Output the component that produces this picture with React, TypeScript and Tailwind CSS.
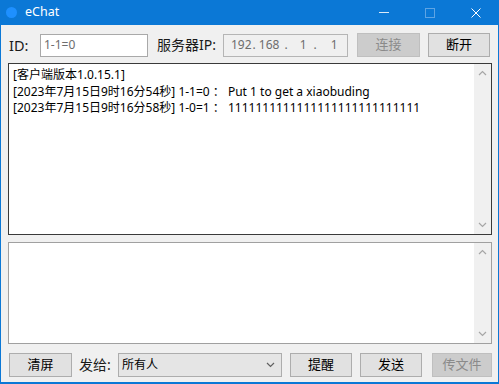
import React from "react";

const font = { fontFamily: '"Noto Sans", "Noto Sans CJK SC", sans-serif' };

function Up() {
  return (
    <svg width="9" height="6" viewBox="0 0 9 6">
      <polyline points="1,5 4.5,1.5 8,5" fill="none" stroke="#a6a6a6" strokeWidth="1.2" />
    </svg>
  );
}
function Down({ color = "#a6a6a6" }: { color?: string }) {
  return (
    <svg width="9" height="6" viewBox="0 0 9 6">
      <polyline points="1,1 4.5,4.5 8,1" fill="none" stroke={color} strokeWidth="1.2" />
    </svg>
  );
}

function Scroll() {
  return (
    <div className="w-[17px] h-full bg-[#f0f0f0] flex flex-col items-center justify-between py-[6px]">
      <Up />
      <Down />
    </div>
  );
}

export default function App() {
  return (
    <div className="w-[499px] h-[384px] bg-[#0b78d6] flex flex-col overflow-hidden" style={font}>
      {/* title bar */}
      <div className="h-[25px] flex items-center text-white">
        <div className="ml-[6px] w-[11px] h-[11px] rounded-full bg-[#1e90ff]" />
        <span className="ml-[8px] text-[12.5px] leading-none">eChat</span>
        <div className="ml-auto flex items-center h-full">
          <div className="w-[46px] h-full flex items-center justify-center">
            <div className="w-[10px] h-[1px] bg-[#dbeaf8]" />
          </div>
          <div className="w-[46px] h-full flex items-center justify-center">
            <div className="w-[10px] h-[10px] border border-[#5ea4e4]" />
          </div>
          <div className="w-[46px] h-full flex items-center justify-center">
            <svg width="10" height="10" viewBox="0 0 10 10">
              <path d="M0.5 0.5 L9.5 9.5 M9.5 0.5 L0.5 9.5" stroke="#ffffff" strokeWidth="1" />
            </svg>
          </div>
        </div>
      </div>

      {/* body */}
      <div className="flex-1 mx-[1px] mb-[2px] bg-[#f0f0f0] flex flex-col text-black">
        {/* top row */}
        <div className="mt-[8px] h-[24px] flex items-center pl-[8px]">
          <span className="w-[31px] text-[14.5px] leading-none text-[#1a1a1a]">ID:</span>
          <div className="w-[108px] h-[23px] bg-white border border-[#a9a9a9] flex items-center pl-[3px] text-[12px] text-[#6d6d6d]">
            1-1=0
          </div>
          <span className="ml-[9px] w-[66px] text-[14px] leading-none whitespace-nowrap text-[#1a1a1a]">服务器IP:</span>
          <div className="w-[125px] h-[23px] bg-[#f0f0f0] border border-[#b5b5b5] flex items-center text-[12px] text-[#6d6d6d] whitespace-pre">
            <span className="ml-[7px]">192</span>
            <span className="ml-[1px]">.</span>
            <span className="ml-[3px]">168</span>
            <span className="ml-[5px]">.</span>
            <span className="ml-[12px]">1</span>
            <span className="ml-[7px]">.</span>
            <span className="ml-[14px]">1</span>
          </div>
          <div className="ml-[9px] w-[63px] h-[24px] bg-[#cccccc] border border-[#bfbfbf] flex items-center justify-center text-[13px] text-[#8a8a8a]">
            连接
          </div>
          <div className="ml-[8px] w-[62px] h-[24px] bg-[#e1e1e1] border border-[#adadad] flex items-center justify-center text-[13px]">
            断开
          </div>
        </div>

        {/* log */}
        <div className="mt-[6px] ml-[7px] mr-[6px] h-[172px] bg-white border border-[#3a3a3a] flex">
          <div className="flex-1 pl-[4px] pt-[3px] text-[12px] leading-[16.5px] whitespace-pre">
            <div>[客户端版本1.0.15.1]</div>
            <div>[2023年7月15日9时16分54秒] 1-1=0 ： Put 1 to get a xiaobuding</div>
            <div>[2023年7月15日9时16分58秒] 1-0=1 ： 1111111111111111111111111111</div>
          </div>
          <Scroll />
        </div>

        {/* input */}
        <div className="mt-[7px] ml-[7px] mr-[6px] h-[102px] bg-white border border-[#a0a0a0] flex">
          <div className="flex-1" />
          <Scroll />
        </div>

        {/* bottom row */}
        <div className="mt-[9px] h-[24px] flex items-center pl-[8px]">
          <div className="w-[63px] h-[24px] bg-[#e1e1e1] border border-[#adadad] flex items-center justify-center text-[13px]">
            清屏
          </div>
          <span className="ml-[7px] w-[39px] text-[14px] leading-none whitespace-nowrap text-[#1a1a1a]">发给:</span>
          <div className="w-[164px] h-[24px] bg-[#e5e5e5] border border-[#adadad] flex items-center pl-[3px] pr-[6px] text-[12px]">
            <span>所有人</span>
            <span className="ml-auto">
              <Down color="#606060" />
            </span>
          </div>
          <div className="ml-[8px] w-[62px] h-[24px] bg-[#e1e1e1] border border-[#adadad] flex items-center justify-center text-[13px]">
            提醒
          </div>
          <div className="ml-[8px] w-[62px] h-[24px] bg-[#e1e1e1] border border-[#adadad] flex items-center justify-center text-[13px]">
            发送
          </div>
          <div className="ml-[10px] w-[60px] h-[24px] bg-[#cccccc] border border-[#bfbfbf] flex items-center justify-center text-[13px] text-[#8a8a8a]">
            传文件
          </div>
        </div>
      </div>
    </div>
  );
}
